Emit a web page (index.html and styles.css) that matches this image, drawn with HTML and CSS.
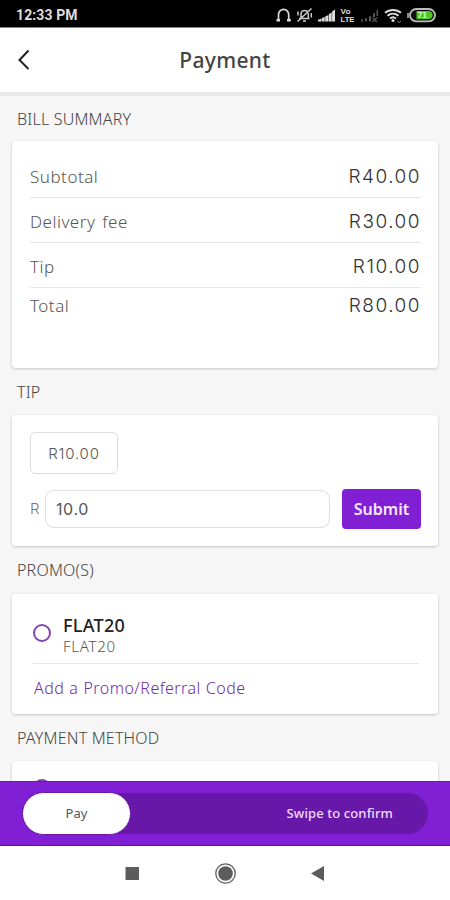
FILE: index.html
```html
<!DOCTYPE html>
<html lang="en">
<head>
<meta charset="utf-8">
<meta name="viewport" content="width=device-width, initial-scale=1">
<title>Payment</title>
<link rel="stylesheet" href="styles.css">
</head>
<body>
<div class="phone">
  <div class="status">
    <span class="clock">12:33 PM</span>
    <svg class="status-icons" width="164" height="20" viewBox="0 0 164 20" aria-hidden="true">
      <g fill="none" stroke="#ddd" stroke-width="1.7">
        <path d="M3.500 15.500V9.500a5 5 0 0 1 10.200 0v6"/>
        <path d="M1.500 15.200h3.500M12 15.200h3.800" stroke-width="2.600"/>
      </g>
      <g fill="none" stroke="#ccc" stroke-width="1.500">
        <path d="M24 13.500h10.500M26 13V8.500a3.700 3.700 0 0 1 7.300 0V13M28 16h3M22.500 16.500 36.500 3.500"/>
        <path d="M23 6.500v4M36.300 8v4.500"/>
      </g>
      <g fill="#ddd">
        <path d="M43 16.500v-1.800l3-1v2.800zM46.500 16.500v-3.300l3.200-1.200v4.500zM50.200 16.500v-5l3.200-1.500v6.500zM53.900 16.500V9l2.800-1.400v8.900zM57.100 16.500V6.500l2.900-2v12z"/>
      </g>
      <g fill="#ddd" font-family="Liberation Sans, sans-serif" font-weight="700">
        <text x="65.500" y="9" font-size="6.500" textLength="10" lengthAdjust="spacingAndGlyphs">Vo</text>
        <text x="65.500" y="16.800" font-size="8" textLength="14" lengthAdjust="spacingAndGlyphs">LTE</text>
      </g>
      <g fill="#555">
        <path d="M86 16.500v-1.800l2-.6v2.400zM90 16.500v-3l2-.7v3.700zM94 16.500v-5l2-.8v5.800zM98 12V8.600l2-.9V12zM101.500 11V5.500l1.500-1V11z"/>
        <path d="m97.500 12.500 4.500 4.500m0-4.500-4.500 4.500" stroke="#555" stroke-width="1.200"/>
      </g>
      <g fill="none" stroke="#ddd" stroke-width="2">
        <path d="M110 7.800c4.600-3.900 11.400-3.900 16 0M112.500 10.800c3.300-2.900 7.700-2.900 11 0M115 13.500c1.900-1.600 4.100-1.600 6 0"/>
      </g>
      <circle cx="118" cy="15.400" r="1.500" fill="#ddd"/>
      <path d="m122.500 16 1.700 1.700 1.700-1.700" stroke="#999" fill="none" stroke-width="1"/>
      <rect x="135" y="4" width="25" height="12.300" rx="6.150" fill="#111" stroke="#bbb" stroke-width="1.800"/>
      <path d="M133 8v5" stroke="#bbb" stroke-width="1.500"/>
      <path d="M141.500 6H153.500a4.150 4.150 0 0 1 0 8.300h-12z" fill="#4fc71e"/>
      <text x="142.500" y="13.300" font-size="8.500" font-weight="700" font-family="Liberation Sans, sans-serif" fill="#d9ffc9">71</text>
    </svg>
  </div>
  <header class="header">
    <svg class="back" width="14" height="22" viewBox="0 0 14 22" aria-hidden="true"><path d="M11.500 1.500 2.500 11l9 9" fill="none" stroke="#222" stroke-width="2"/></svg>
    <h1 class="title">Payment</h1>
  </header>
  <main class="content">
    <h2 class="section s-bill">BILL SUMMARY</h2>
    <section class="card bill">
      <div class="row"><span>Subtotal</span><span class="amount">R40.00</span></div>
      <div class="row"><span>Delivery fee</span><span class="amount">R30.00</span></div>
      <div class="row"><span>Tip</span><span class="amount">R10.00</span></div>
      <div class="row total"><span>Total</span><span class="amount">R80.00</span></div>
    </section>
    <h2 class="section">TIP</h2>
    <section class="card tip">
      <div class="chip">R10.00</div>
      <div class="tip-form">
        <span class="currency">R</span>
        <div class="field">10.0</div>
        <div class="submit">Submit</div>
      </div>
    </section>
    <h2 class="section s-promo">PROMO(S)</h2>
    <section class="card promo">
      <div class="option">
        <span class="radio"></span>
        <div class="option-text"><div class="code">FLAT20</div><div class="note">FLAT20</div></div>
      </div>
      <div class="add">Add a Promo/Referral Code</div>
    </section>
    <h2 class="section s-method">PAYMENT METHOD</h2>
    <section class="card method"><span class="radio"></span></section>
  </main>
  <div class="paybar">
    <div class="track"><div class="thumb">Pay</div><span class="hint">Swipe to confirm</span></div>
  </div>
  <nav class="nav">
    <svg width="450" height="54" viewBox="0 0 450 54" aria-hidden="true">
      <rect x="125.500" y="21" width="13.500" height="13" fill="#5c5c5c"/>
      <circle cx="225.500" cy="27.500" r="9.700" fill="none" stroke="#5c5c5c" stroke-width="1.300"/>
      <circle cx="225.500" cy="27.500" r="7.300" fill="#5c5c5c"/>
      <path d="M311 27.500 324 20v15z" fill="#5c5c5c"/>
    </svg>
  </nav>
</div>
</body>
</html>
```
FILE: styles.css
```css
* { box-sizing: border-box; }
body { margin: 0; background: #f6f6f6; font-family: "Noto Sans", "Open Sans", sans-serif; color: #555; }
.phone { width: 450px; height: 900px; display: flex; flex-direction: column; overflow: hidden; white-space: nowrap; }
.status { flex: none; height: 28px; background: #000; border-bottom: 1px solid #888; display: flex; align-items: center; justify-content: space-between; padding: 2px 11px 0 16px; }
.clock { color: #ddd; font: 700 14px/20px Roboto, sans-serif; letter-spacing: 0.1px; }
.header { flex: none; height: 68px; background: #fff; border-bottom: 4px solid #e9e9e9; display: grid; grid-template-columns: 60px 1fr 60px; align-items: center; }
.back { margin-left: 17px; }
.title { margin: 0; text-align: center; font-size: 21px; line-height: 28px; padding-bottom: 1px; font-weight: 500; color: #444; letter-spacing: 0.35px; }
.content { flex: 1; min-height: 0; overflow: hidden; padding: 0 12px; }
.section { margin: 0; padding-left: 5px; height: 47px; line-height: 48px; font-size: 16px; font-weight: 300; color: #444; letter-spacing: 0.2px; }
.s-bill { height: 45px; line-height: 46px; }
.s-promo { height: 48px; line-height: 49px; }
.card { background: #fff; border-radius: 4px; box-shadow: 0 1px 3px rgba(0, 0, 0, 0.2); }
.bill { height: 227px; padding: 12px 17px 0 18px; }
.row { display: flex; justify-content: space-between; align-items: center; height: 45px; border-bottom: 1px solid #e6e6e6; padding-top: 3px; font-size: 17px; font-weight: 300; letter-spacing: 0.5px; word-spacing: 2px; }
.total { height: 35px; border: 0; padding-top: 0; }
.amount { font-family: Inter, sans-serif; font-size: 19px; font-weight: 300; color: #333; letter-spacing: 1.5px; }
.tip { height: 131px; padding: 17px; padding-left: 18px; }
.chip { width: 88px; height: 42px; border: 1px solid #ddd; border-radius: 5px; font: 300 15px/41px Inter, sans-serif; letter-spacing: 0.8px; text-align: center; color: #555; }
.tip-form { display: flex; align-items: center; height: 40px; margin-top: 15px; }
.currency { width: 15px; flex: none; font: 300 15px/20px Inter, sans-serif; color: #777; }
.field { flex: 1; height: 38px; border: 1px solid #ddd; border-radius: 9px; padding-left: 10px; font: 400 16px/36px Inter, sans-serif; letter-spacing: 0.6px; color: #555; }
.submit { flex: none; width: 79px; height: 40px; margin-left: 12px; border-radius: 4px; background: #801fd3; color: #f6e9ff; text-align: center; font-size: 16px; font-weight: 600; line-height: 40px; }
.promo { height: 120px; padding: 20px 19px 0 21px; }
.option { display: flex; height: 50px; border-bottom: 1px solid #e6e6e6; }
.radio { flex: none; display: block; width: 18px; height: 18px; border: 2px solid #8047b3; border-radius: 50%; }
.option .radio { margin: 10px 12px 0 0; }
.code { color: #222; font-size: 18px; line-height: 22px; font-weight: 500; letter-spacing: 0.3px; }
.note { font-size: 15px; line-height: 20px; font-weight: 300; letter-spacing: 0.7px; }
.add { color: #6e2ba8; font-size: 16px; line-height: 48px; padding-left: 1px; font-weight: 300; letter-spacing: 0.45px; word-spacing: 0.5px; }
.method { height: 60px; padding: 18px 21px; }
.paybar { flex: none; height: 65px; background: #801fd3; border-top: 1px solid #6c16b4; border-bottom: 1px solid #6110a6; padding: 11px 22px; }
.track { height: 41px; border-radius: 21px; background: #6818a9; display: flex; align-items: center; justify-content: space-between; padding-right: 35px; }
.thumb { width: 109px; height: 43px; border: 1px solid #6818a9; border-radius: 22px; background: #fff; text-align: center; font-size: 13px; line-height: 40px; color: #555; }
.hint { color: #f0ddff; font-size: 13px; line-height: 18px; padding-bottom: 1px; font-weight: 500; letter-spacing: 0.1px; }
.nav { flex: none; height: 54px; background: #fff; }
.nav svg { display: block; }
```
